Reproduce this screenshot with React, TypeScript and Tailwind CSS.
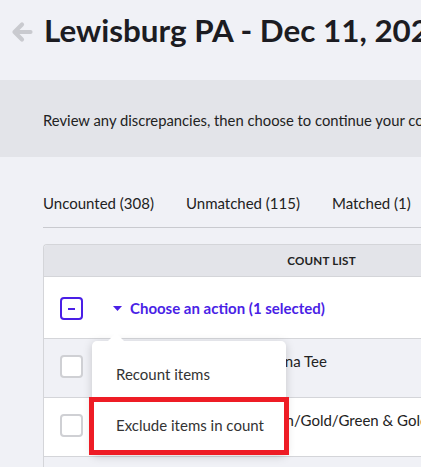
const Checkbox = ({ partial }: { partial?: boolean }) =>
  partial ? (
    <div className="flex h-[23px] w-[23px] items-center justify-center rounded-[4px] border-2 border-[#4a1fe6] bg-white">
      <div className="h-[2px] w-[7px] bg-[#4a1fe6]" />
    </div>
  ) : (
    <div className="h-[23px] w-[23px] rounded-[4px] border-2 border-[#cfd0d4] bg-white" />
  )

const ItemRow = ({ name, indent, striped }: { name: string; indent: string; striped?: boolean }) => (
  <div
    className={`flex h-[59px] items-start border-t border-[#d4d5d9] ${striped ? 'bg-[#f0f1f6]' : 'bg-white'}`}
  >
    <div className="pl-[16px] pt-[16px]">
      <Checkbox />
    </div>
    <div className={`whitespace-nowrap pt-[11px] text-[15px] text-[#222] ${indent}`}>{name}</div>
  </div>
)

export default function App() {
  return (
    <div className="h-[467px] w-[421px] overflow-hidden bg-[#f0f1f6] font-[Lato,sans-serif] text-[#1c1c22]">
      <header className="flex h-[80px] items-start gap-[11px] pl-[11px] pt-[11px]">
        <svg width="22" height="22" viewBox="0 0 22 22" className="mt-[10px] shrink-0 text-[#c9cacf]">
          <path
            d="M19.5 11H3.5M11 3.5 3.5 11 11 18.5"
            fill="none"
            stroke="currentColor"
            strokeWidth="4.2"
            strokeLinecap="round"
            strokeLinejoin="round"
          />
        </svg>
        <h1 className="whitespace-nowrap text-[31.4px] font-bold leading-[38px]">Lewisburg PA - Dec 11, 2023</h1>
      </header>

      <div className="flex h-[77px] items-center whitespace-nowrap bg-[#e3e4e9] pl-[43px] pt-[3px] text-[14.8px] text-[#222]">
        Review any discrepancies, then choose to continue your count or finish
      </div>

      <div className="pl-[43px]">
        <nav className="mt-[35px] flex h-[36px] gap-[32px] whitespace-nowrap border-b border-[#c9cacf] text-[15px] text-[#222]">
          <span>Uncounted (308)</span>
          <span>Unmatched (115)</span>
          <span>Matched (1)</span>
          <span>All (424)</span>
        </nav>

        <div className="relative mt-[16px] w-[556px] rounded-tl-[4px] border-l border-t border-[#d4d5d9]">
          <div className="flex h-[31px] items-center justify-center rounded-tl-[4px] bg-[#e3e4e9] text-[11.6px] font-bold tracking-[0.2px] text-[#222]">
            COUNT LIST
          </div>

          <div className="flex h-[62px] items-center border-t border-[#d4d5d9] bg-white pt-[2px]">
            <div className="pl-[16px]">
              <Checkbox partial />
            </div>
            <div className="flex items-center gap-[8px] pl-[30px] text-[15px] font-bold text-[#4a1fe6]">
              <svg width="9" height="5" viewBox="0 0 9 5" className="fill-current">
                <path d="M0 0h9L4.5 5z" />
              </svg>
              <span>Choose an action (1 selected)</span>
            </div>
          </div>

          <ItemRow name="Lewisburg Bison Alumna Tee" indent="pl-[57px]" striped />
          <ItemRow name="Pennant Maroon/Gold/Green & Gold" indent="pl-[101px]" />
          <div className="h-[40px] border-t border-[#d4d5d9] bg-[#f0f1f6]" />

          <div className="absolute left-[48px] top-[96px] w-[194px] rounded-[5px] bg-white shadow-[0_2px_10px_rgba(0,0,0,0.18)]">
            <div className="absolute -top-[8px] left-[15px] h-0 w-0 border-x-[9px] border-b-[9px] border-x-transparent border-b-white" />
            <div className="flex h-[56px] items-center pl-[24px] pt-[10px] text-[15px] text-[#333]">Recount items</div>
            <div className="flex h-[57px] items-center pl-[24px] text-[15px] text-[#333]">Exclude items in count</div>
          </div>

          <div className="pointer-events-none absolute left-[45px] top-[152px] h-[58px] w-[200px] border-[5px] border-[#ee1c25]" />
        </div>
      </div>
    </div>
  )
}
